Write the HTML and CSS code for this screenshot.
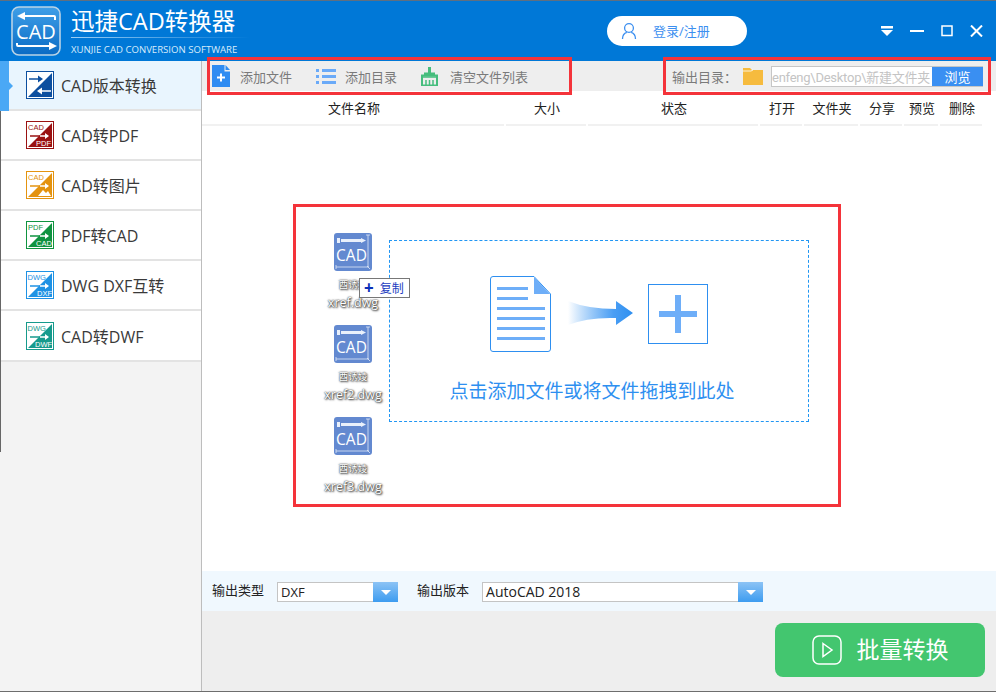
FILE: index.html
```html
<!DOCTYPE html>
<html lang="zh-CN">
<head>
<meta charset="utf-8">
<title>迅捷CAD转换器</title>
<link rel="stylesheet" href="styles.css">
</head>
<body>
<svg class="defs" width="0" height="0">
  <symbol id="cadglyph" viewBox="0 0 38 38">
    <rect width="38" height="38" rx="3" fill="#6389d0"/>
    <path d="M3 5h3v5H3zM7 6h20v3H7z" fill="#e9f0fb"/><path d="M27 5l5 2.500-5 2.500z" fill="#e9f0fb"/>
    <path d="M34 2v32M2 34h33M32 2h4M33 33l3 3M2 32v4" stroke="#dfe8f7" stroke-width=".8" fill="none"/>
    <text x="17.500" y="28" class="cad-t">CAD</text>
  </symbol>
</svg>
<div class="app">
  <header class="topbar">
    <div class="brand">
      <svg class="logo" width="50" height="50" viewBox="0 0 50 50">
        <defs><linearGradient id="lg" x1="0" y1="0" x2="0" y2="1"><stop offset="0" stop-color="#3f9fe8"/><stop offset="1" stop-color="#0a6bc4"/></linearGradient></defs>
        <rect x="1" y="1" width="48" height="48" rx="7" fill="url(#lg)" stroke="#b9d3e6" stroke-width="1.6"/>
        <path d="M44 14V11q0-1-1-1H9" fill="none" stroke="#fff" stroke-width="2"/>
        <path d="M6 10l8-4v8z" fill="#fff"/>
        <path d="M6 37v2q0 1 1 1h34" fill="none" stroke="#fff" stroke-width="2"/>
        <path d="M46 40l-8-4v8z" fill="#fff"/>
        <text x="25" y="32.5" class="logo-text">CAD</text>
      </svg>
      <div class="brand-text">
        <div class="brand-title">迅捷CAD转换器</div>
        <div class="brand-sub">XUNJIE CAD CONVERSION SOFTWARE</div>
      </div>
    </div>
    <button class="login">
      <svg width="16" height="18" viewBox="0 0 16 18"><circle cx="8" cy="6" r="4.4" fill="none" stroke="#3c8ff0" stroke-width="1.3"/><path d="M1.5 17c0-4 2.500-6 4.300-6.600M14.500 17c0-4-2.500-6-4.300-6.600" fill="none" stroke="#3c8ff0" stroke-width="1.300"/></svg>
      <span class="login-text">登录/注册</span>
    </button>
    <div class="winctl">
      <svg width="12" height="10" viewBox="0 0 12 10"><path d="M0 0h12v2.500H0z" fill="#fff"/><path d="M0 4h12l-6 6z" fill="#fff"/></svg>
      <svg width="14" height="12" viewBox="0 0 14 12"><path d="M0 6h14" stroke="#fff" stroke-width="2"/></svg>
      <svg width="12" height="12" viewBox="0 0 12 12"><rect x="1" y="1" width="10" height="9.500" fill="none" stroke="#fff" stroke-width="1.500"/></svg>
      <svg width="13" height="12" viewBox="0 0 13 12"><path d="M1 .5l11 11M12 .5l-11 11" stroke="#fff" stroke-width="2"/></svg>
    </div>
  </header>

  <div class="body">
    <nav class="sidebar">
      <a class="nav-item active">
        <svg class="nav-icon" viewBox="0 0 28 28"><rect x=".5" y=".5" width="27" height="27" fill="#fff" stroke="#0d4f9f"/><path d="M26 2v24H2z" fill="#0d4f9f"/><path d="M3 8h10" stroke="#0d4f9f" stroke-width="1.500"/><path d="M17 8l-5-3.500v7z" fill="#0d4f9f"/><path d="M25 20H14" stroke="#fff" stroke-width="1.500"/><path d="M11 20l5-3.500v7z" fill="#fff"/></svg>
        <span>CAD版本转换</span>
      </a>
      <a class="nav-item">
        <svg class="nav-icon" viewBox="0 0 28 28"><rect x=".5" y=".5" width="27" height="27" fill="#fff" stroke="#9a1212"/><path d="M26 2v24H2z" fill="#9a1212"/><text x="2" y="9" class="ni-t" fill="#9a1212">CAD</text><path d="M4 15h14" stroke="#9a1212" stroke-width="1.500"/><path d="M14 15h8" stroke="#fff" stroke-width="1.500"/><path d="M23 15l-4-3v6z" fill="#fff"/><text x="10" y="25" class="ni-t" fill="#fff">PDF</text></svg>
        <span>CAD转PDF</span>
      </a>
      <a class="nav-item">
        <svg class="nav-icon" viewBox="0 0 28 28"><rect x=".5" y=".5" width="27" height="27" fill="#fff" stroke="#e4930f"/><path d="M26 2v24H2z" fill="#e4930f"/><text x="2" y="9" class="ni-t" fill="#e4930f">CAD</text><path d="M4 15h14" stroke="#e4930f" stroke-width="1.500"/><path d="M14 15h8" stroke="#fff" stroke-width="1.500"/><path d="M23 15l-4-3v6z" fill="#fff"/><path d="M12 25l5-6 3 3 2-2 3 5z" fill="#fff"/></svg>
        <span>CAD转图片</span>
      </a>
      <a class="nav-item">
        <svg class="nav-icon" viewBox="0 0 28 28"><rect x=".5" y=".5" width="27" height="27" fill="#fff" stroke="#0f9340"/><path d="M26 2v24H2z" fill="#0f9340"/><text x="2" y="9" class="ni-t" fill="#0f9340">PDF</text><path d="M4 15h14" stroke="#0f9340" stroke-width="1.500"/><path d="M14 15h8" stroke="#fff" stroke-width="1.500"/><path d="M23 15l-4-3v6z" fill="#fff"/><text x="10" y="25" class="ni-t" fill="#fff">CAD</text></svg>
        <span>PDF转CAD</span>
      </a>
      <a class="nav-item">
        <svg class="nav-icon" viewBox="0 0 28 28"><rect x=".5" y=".5" width="27" height="27" fill="#fff" stroke="#1e92e4"/><path d="M26 2v24H2z" fill="#1e92e4"/><text x="1.500" y="9" class="ni-t" fill="#1e92e4">DWG</text><path d="M4 15h14" stroke="#1e92e4" stroke-width="1.500"/><path d="M14 15h8" stroke="#fff" stroke-width="1.500"/><path d="M23 15l-4-3v6z" fill="#fff"/><text x="11" y="25" class="ni-t" fill="#fff">DXF</text></svg>
        <span>DWG DXF互转</span>
      </a>
      <a class="nav-item">
        <svg class="nav-icon" viewBox="0 0 28 28"><rect x=".5" y=".5" width="27" height="27" fill="#fff" stroke="#169a8c"/><path d="M26 2v24H2z" fill="#169a8c"/><text x="1.500" y="9" class="ni-t" fill="#169a8c">DWG</text><path d="M4 15h14" stroke="#169a8c" stroke-width="1.500"/><path d="M14 15h8" stroke="#fff" stroke-width="1.500"/><path d="M23 15l-4-3v6z" fill="#fff"/><text x="9" y="25" class="ni-t" fill="#fff">DWF</text></svg>
        <span>CAD转DWF</span>
      </a>
    </nav>

    <main class="main">
      <div class="toolbar">
        <a class="tool tool-file">
          <svg width="18" height="22" viewBox="0 0 18 22"><path d="M0 0h12.500v6.500H18V22H0z" fill="#2f8cf2"/><path d="M13.500 0L18 5h-4.500z" fill="#2f8cf2"/><path d="M9 8.500v8M5 12.500h8" stroke="#fff" stroke-width="2"/></svg>
          <span>添加文件</span>
        </a>
        <a class="tool tool-dir">
          <svg width="20" height="15" viewBox="0 0 20 15"><g fill="#6aaaf8"><rect width="3" height="3"/><rect x="6" width="14" height="3"/><rect y="6" width="3" height="3"/><rect x="6" y="6" width="14" height="3"/><rect y="12" width="3" height="3"/><rect x="6" y="12" width="14" height="3"/></g></svg>
          <span>添加目录</span>
        </a>
        <a class="tool tool-clear">
          <svg width="17" height="19" viewBox="0 0 17 19"><path d="M7 0h3v6h-3z" fill="#46bd7d"/><path d="M3 5.500h11v3H3z" fill="#46bd7d"/><path d="M1 8.500h15v10H1z" fill="none" stroke="#46bd7d" stroke-width="2"/><path d="M1 10h15M5 13v5M8.500 13v5M12 13v5" stroke="#46bd7d" stroke-width="1.500"/></svg>
          <span>清空文件列表</span>
        </a>
        <div class="outdir">
          <label>输出目录：</label>
          <svg width="20" height="17" viewBox="0 0 20 17"><path d="M0 0h7l2 2h11v15H0z" fill="#f6bb3e"/><path d="M0 3h8l2-1" fill="none" stroke="#fff" stroke-width=".8"/></svg>
          <div class="dirfield"><span class="dirtext">enfeng\Desktop\新建文件夹</span><button class="browse">浏览</button></div>
        </div>
      </div>

      <div class="thead">
        <span>文件名称</span>
        <span>大小</span>
        <span>状态</span>
        <span>打开</span>
        <span>文件夹</span>
        <span>分享</span>
        <span>预览</span>
        <span>删除</span>
      </div>

      <section class="canvas">
        <div class="files">
          <div class="dfile">
            <svg class="cadfile" viewBox="0 0 38 38"><use href="#cadglyph"/></svg>
            <div class="fname"><span class="fname-cn">酉诱婈</span><br>xref.dwg</div>
          </div>
          <div class="dfile">
            <svg class="cadfile" viewBox="0 0 38 38"><use href="#cadglyph"/></svg>
            <div class="fname"><span class="fname-cn">酉诱婈</span><br>xref2.dwg</div>
          </div>
          <div class="dfile">
            <svg class="cadfile" viewBox="0 0 38 38"><use href="#cadglyph"/></svg>
            <div class="fname"><span class="fname-cn">酉诱婈</span><br>xref3.dwg</div>
          </div>
          <div class="copytip"><b>+</b><span>复制</span></div>
        </div>
        <div class="dropzone">
          <div class="dz-art">
            <svg width="61" height="76" viewBox="0 0 61 76"><path d="M.5 3Q.5.500 3 .500h41L60.500 18v55q0 2.500-2.500 2.500H3Q.5 75.500.5 73z" fill="#fff" stroke="#2e8ff0"/><path d="M44 1l16 17H44z" fill="#6eaef8"/><g fill="#6eaef8"><rect x="7" y="11" width="31" height="3"/><rect x="7" y="21" width="31" height="3"/><rect x="7" y="31" width="48" height="3"/><rect x="7" y="41" width="48" height="3"/><rect x="7" y="51" width="48" height="3"/><rect x="7" y="61" width="48" height="3"/></g></svg>
            <svg class="arrow" width="66" height="26" viewBox="0 0 66 26"><defs><linearGradient id="ag"><stop offset="0" stop-color="#2e8ff0" stop-opacity="0"/><stop offset=".7" stop-color="#4a9ef4"/><stop offset="1" stop-color="#2e8ff0"/></linearGradient></defs><path d="M0 0q20 8 48 8V0l17 12-17 12v-7Q20 16 0 24z" fill="url(#ag)"/></svg>
            <svg width="60" height="60" viewBox="0 0 60 60"><rect x=".5" y=".5" width="59" height="59" fill="#fff" stroke="#2e8ff0"/><path d="M27 11h6v38h-6zM11 27h38v6H11z" fill="#6eaef8"/></svg>
          </div>
          <p class="dz-text">点击添加文件或将文件拖拽到此处</p>
        </div>
      </section>

      <div class="options">
        <label>输出类型</label>
        <div class="select sel-type"><span>DXF</span><i class="sel-btn"></i></div>
        <label class="lab2">输出版本</label>
        <div class="select sel-ver"><span>AutoCAD 2018</span><i class="sel-btn"></i></div>
      </div>

      <footer class="foot">
        <button class="convert">
          <svg width="30" height="30" viewBox="0 0 30 30"><rect x="1" y="1" width="28" height="28" rx="6" fill="none" stroke="#fff" stroke-width="1.500"/><path d="M11 8.500l9 6.500-9 6.500z" fill="none" stroke="#fff" stroke-width="1.500"/></svg>
          <span class="convert-text">批量转换</span>
        </button>
      </footer>
    </main>
  </div>
</div>

<div class="mark mark-a"></div>
<div class="mark mark-b"></div>
<div class="mark mark-c"></div>
</body>
</html>
```

FILE: styles.css
```css
* { box-sizing: border-box; }
html, body { margin: 0; padding: 0; height: 100%; overflow: hidden; }
body {
  position: relative;
  width: 996px;
  height: 692px;
  font-family: "Open Sans", "Noto Sans CJK SC", sans-serif;
  background: #fff;
  color: #333;
}
button { font: inherit; border: 0; padding: 0; }
.defs { position: absolute; }

.app { width: 996px; height: 692px; display: flex; flex-direction: column; border-top: 1px solid #5f6f80; border-bottom: 1px solid #6d6d6d; }

/* Title bar */
.topbar { height: 60px; flex: none; background: #0078d7; display: flex; align-items: center; padding-left: 11px; color: #fff; }
.brand { display: flex; align-items: center; width: 596px; gap: 10px; }
.logo { flex: none; }
.logo-text { font: 400 20px "Open Sans", sans-serif; fill: #fff; text-anchor: middle; }
.brand-text { display: flex; flex-direction: column; margin-top: 1px; }
.brand-title { font-size: 23.500px; line-height: 32px; width: 178px; border-bottom: 1px solid; border-image: linear-gradient(90deg, #9fd0f5, #0078d7) 1; white-space: nowrap; }
.brand-sub { font-size: 9.600px; line-height: 18px; white-space: nowrap; color: #d7ebfb; margin-top: 3px; }
.login { width: 140px; height: 30px; border-radius: 15px; background: #fff; color: #3c8ff0; display: flex; align-items: center; padding-left: 14px; gap: 16px; font-size: 13px; }
.login-text { margin-top: -2px; }
.winctl { display: flex; align-items: center; margin-left: 134px; gap: 17px; }

/* Body */
.body { flex: 1; display: flex; min-height: 0; }
.sidebar { width: 202px; flex: none; background: #f3f3f3; border-right: 1px solid #bdbdbd; position: relative; display: flex; flex-direction: column; }
.sidebar::before { content: ""; position: absolute; left: 0; top: 0; width: 1px; height: 391px; background: #666; }
.nav-item { height: 50px; flex: none; display: flex; align-items: center; background: #fff; border-bottom: 2px solid #e3e3e3; padding: 0 0 0 26px; gap: 7px; font-size: 16px; color: #3a3a3a; position: relative; margin-left: 1px; white-space: nowrap; }
.nav-item:last-child { height: 51px; }
.nav-icon { width: 28px; height: 28px; flex: none; margin-left: -1px; }
.ni-t { font: 400 7.500px "Liberation Sans", sans-serif; }
.active { background: #e9f5fe; }
.active::before { content: ""; position: absolute; left: -1px; top: 0; bottom: -2px; width: 9px; background: #4aa8f5; }
.active::after { content: ""; position: absolute; left: 8px; top: 21px; border-left: 4px solid #4aa8f5; border-top: 4px solid transparent; border-bottom: 4px solid transparent; }

.main { flex: 1; min-width: 0; display: flex; flex-direction: column; }
.toolbar { height: 30px; flex: none; background: #eee; display: flex; align-items: center; padding-left: 10px; font-size: 13px; color: #7a7a7a; }
.tool { display: flex; align-items: center; white-space: nowrap; }
.tool-file { gap: 10px; width: 104px; }
.tool-dir { gap: 9px; width: 105px; }
.tool-clear { gap: 12px; }
.outdir { margin-left: auto; display: flex; align-items: center; margin-right: 13px; }
.outdir svg { margin: 0 8px 0 6px; flex: none; }
.outdir label { white-space: nowrap; }
.dirfield { width: 212px; height: 21px; background: #fff; border: 1px solid #c6c6c6; border-right: 0; display: flex; align-items: center; overflow: hidden; }
.dirtext { flex: 1; min-width: 0; font-family: Roboto, "Noto Sans CJK SC", sans-serif; font-size: 13px; letter-spacing: -.25px; color: #c4c4c4; white-space: nowrap; overflow: hidden; }
.browse { width: 51px; height: 21px; background: #3a8ff2; color: #fff; font-size: 13px; flex: none; }

.thead { height: 35px; flex: none; display: grid; grid-template-columns: 304px 82px 172px 44px 56px 44px 36px 44px; font-size: 13px; color: #222; text-align: center; }
.thead span { white-space: nowrap; padding: 2px 0 0 2px; line-height: 31px; border-bottom: 2px solid #f1f1f1; margin-right: 2px; }

.canvas { flex: 1; min-height: 0; display: flex; padding: 114px 0 0 123px; align-items: flex-start; background: #fff; }
.files { width: 64px; margin-top: -7px; padding-right: 8px; display: flex; flex-direction: column; align-items: center; position: relative; flex: none; }
.dfile { height: 92px; display: flex; flex-direction: column; align-items: center; }
.cadfile { width: 38px; height: 38px; flex: none; }
.cad-t { font: 400 15.500px "Open Sans", sans-serif; fill: #fff; text-anchor: middle; }
.fname { font-size: 12.500px; line-height: 18px; margin-top: 4px; color: #fff; text-align: center; white-space: nowrap; text-shadow: 0 0 2px #444, 1px 1px 2px #333, 0 0 1px #555; }
.fname-cn { font-size: 9.500px; }
.copytip { position: absolute; left: 34px; top: 45px; width: 51px; height: 20px; background: #fff; border: 1px solid #777; font-size: 12px; color: #1c3cc0; padding-left: 4px; display: flex; align-items: center; gap: 6px; white-space: nowrap; }
.copytip b { font-size: 17px; line-height: 18px; color: #0b2fb8; font-weight: 700; }
.dropzone { width: 420px; height: 182px; border: 1px dashed #2196f3; display: flex; flex-direction: column; align-items: center; }
.dz-art { display: flex; align-items: center; margin-top: 35px; height: 76px; }
.arrow { margin: 0 14px 0 17px; }
.dz-text { margin: 26px 14px 0 0; font-size: 19px; line-height: 26px; color: #2e8ff0; white-space: nowrap; }

.options { height: 40px; flex: none; background: #f0f8fe; display: flex; align-items: center; padding-left: 10px; font-size: 13px; color: #222; }
.options label { white-space: nowrap; margin-top: -4px; }
.select { height: 20px; background: #fff; border: 1px solid #c4c4c4; border-right: 0; margin-left: 13px; display: flex; align-items: center; padding-left: 3px; font-size: 13px; position: relative; margin-top: 1px; }
.sel-type { width: 121px; }
.sel-ver { width: 281px; font-size: 14px; }
.lab2 { margin-left: 19px; }
.sel-btn { position: absolute; right: 0; top: -1px; bottom: -1px; width: 25px; background: linear-gradient(#8cc3f5, #3d9cf0); }
.sel-btn::after { content: ""; position: absolute; left: 8px; top: 8px; border-top: 5px solid #fff; border-left: 5px solid transparent; border-right: 5px solid transparent; }

.foot { height: 80px; flex: none; background: #eee; display: flex; justify-content: flex-end; padding: 12px 11px 0 0; }
.convert { width: 210px; height: 54px; background: #43c66f; border-radius: 8px; color: #fff; font-size: 23px; display: flex; align-items: center; justify-content: center; gap: 15px; }
.convert-text { margin-top: -5px; }

/* Annotation rectangles drawn on top of the screenshot */
.mark { position: absolute; border: 3px solid #f4333a; pointer-events: none; }
.mark-a { left: 207px; top: 57px; width: 365px; height: 38px; }
.mark-b { left: 663px; top: 57px; width: 328px; height: 38px; }
.mark-c { left: 293px; top: 204px; width: 548px; height: 303px; }
```
